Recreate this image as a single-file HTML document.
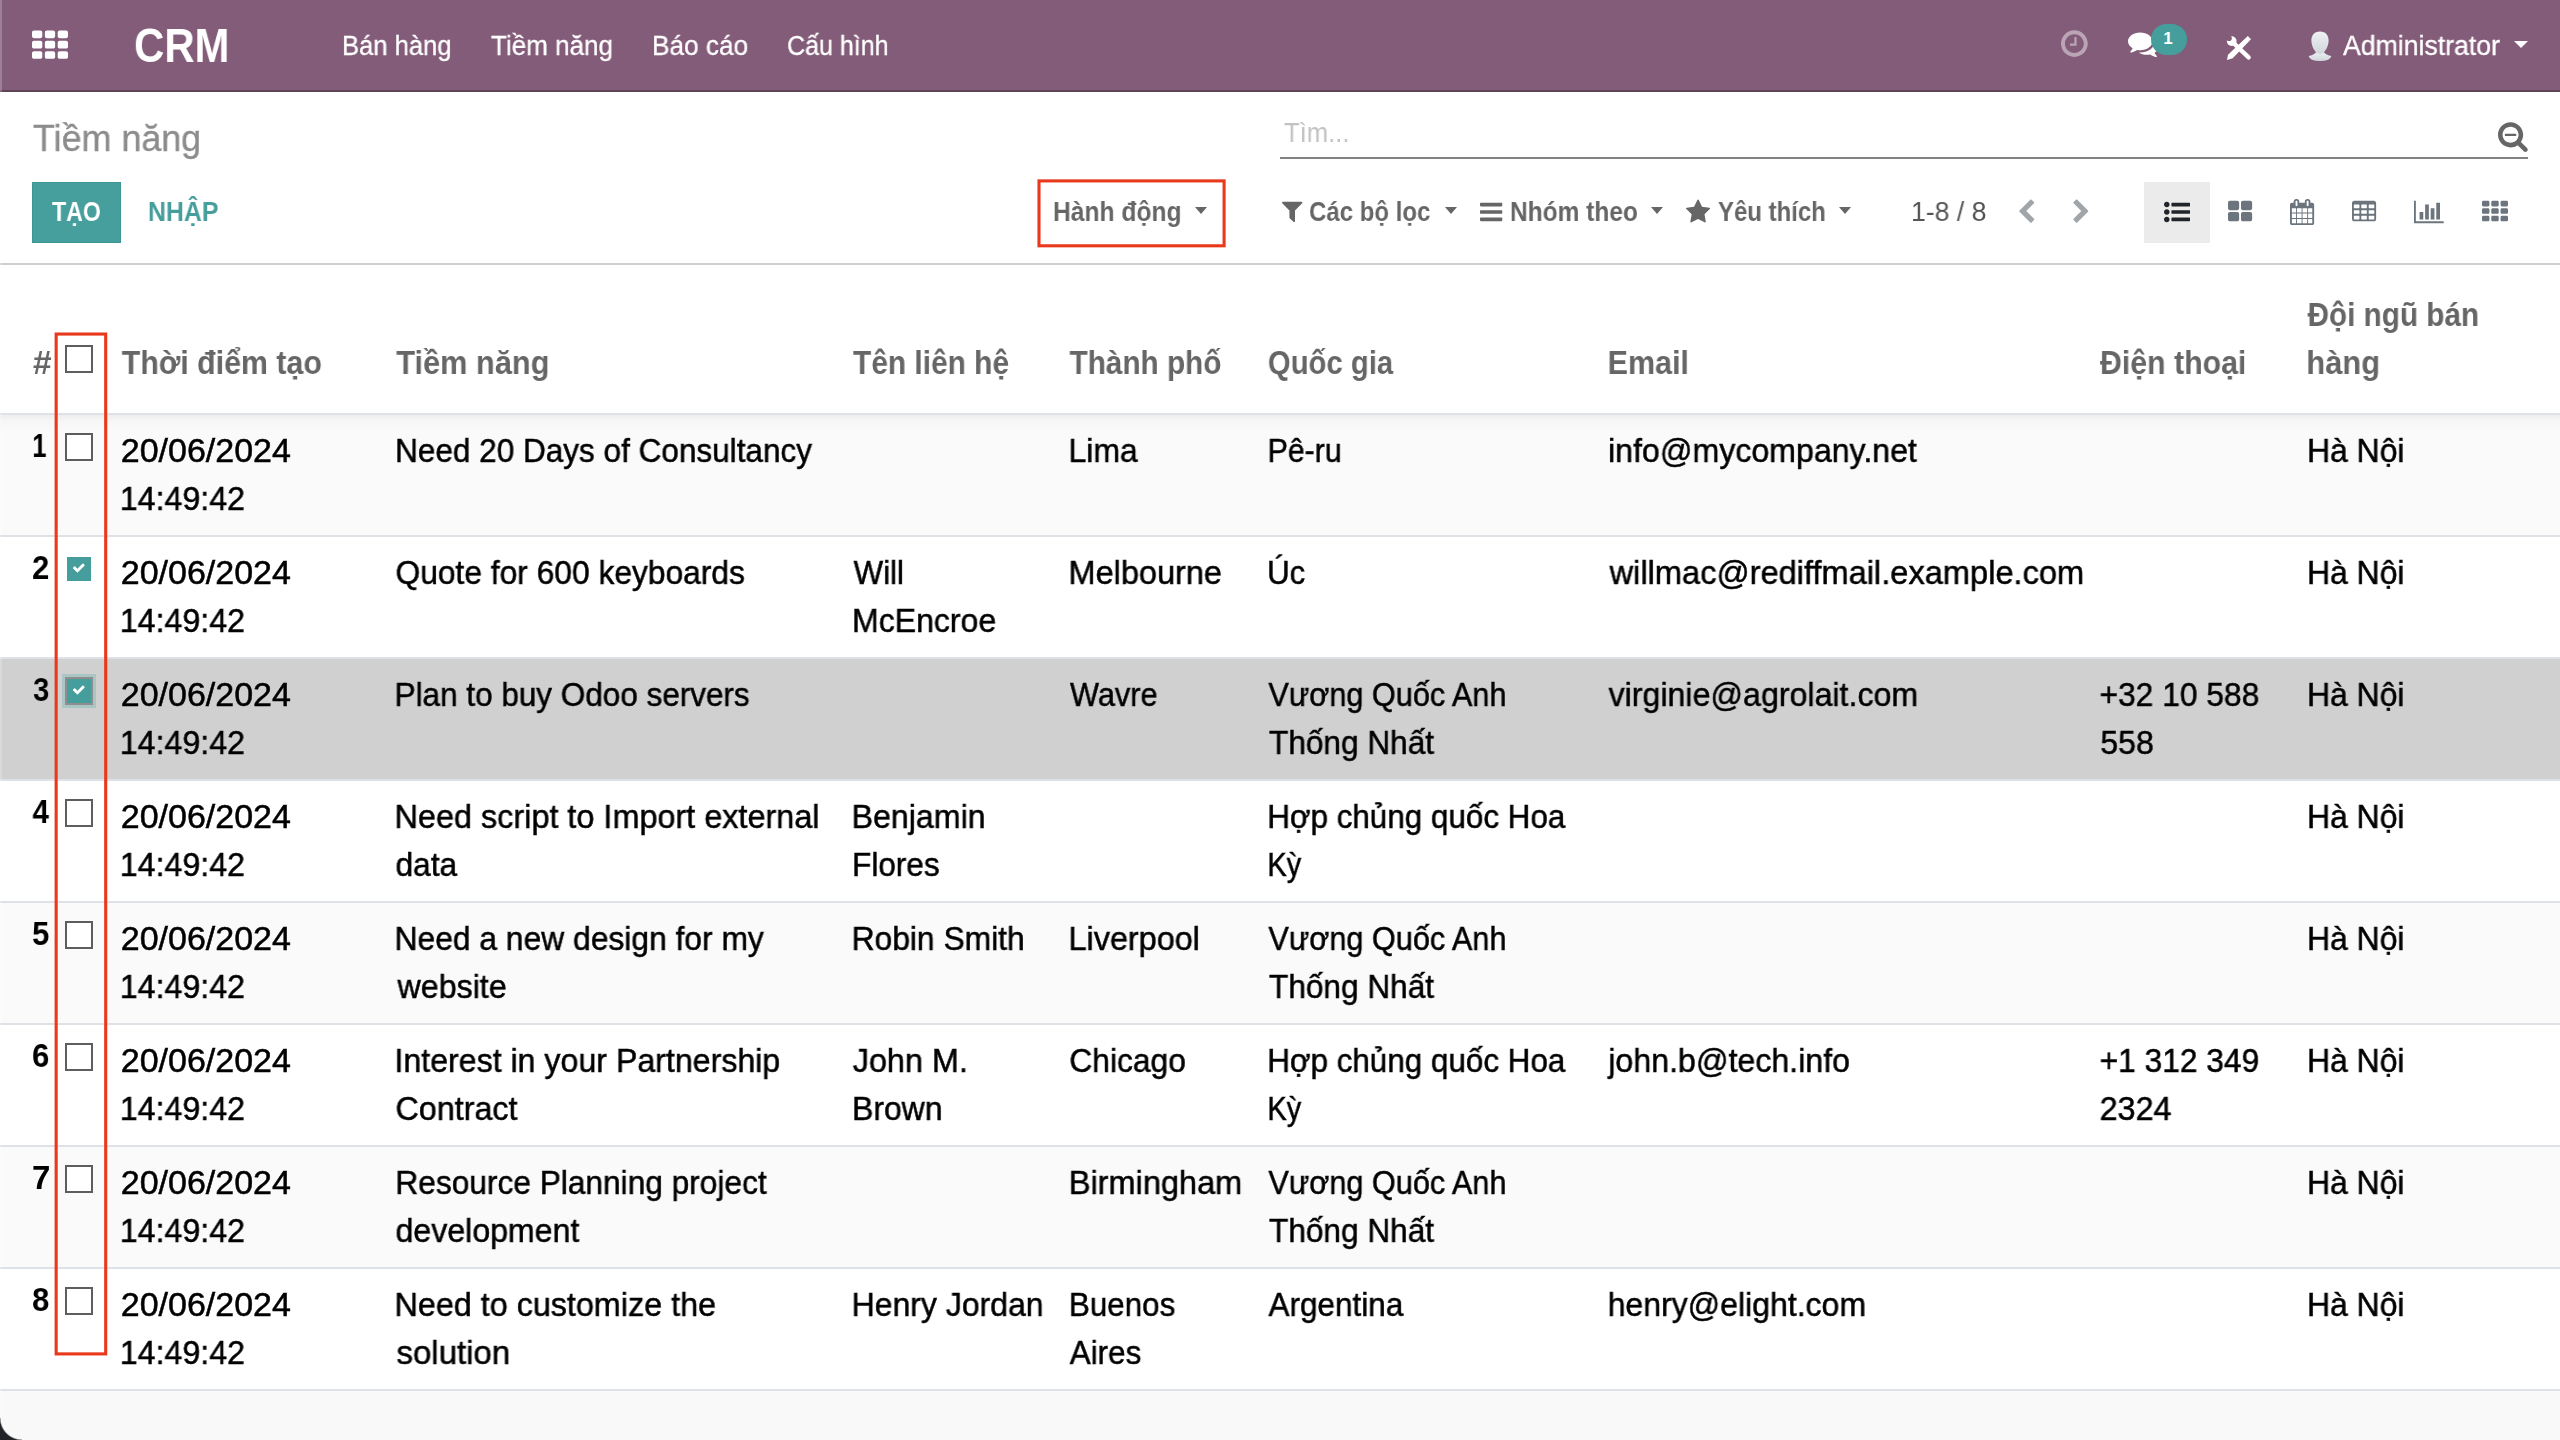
<!DOCTYPE html>
<html lang="vi">
<head>
<meta charset="utf-8">
<title>Tiềm năng - CRM</title>
<style>
*{box-sizing:border-box}
html,body{margin:0;padding:0}
body{width:2560px;height:1440px;overflow:hidden;background:#f9f9f9;font-family:"Liberation Sans","DejaVu Sans",sans-serif;position:relative}
.t{will-change:transform;position:absolute;white-space:nowrap;transform-origin:0 0;line-height:1;display:block}
.ic{position:absolute;display:block;overflow:visible}
.caret{position:absolute;width:0;height:0;display:block}
/* navbar */
.nav{position:absolute;left:0;top:0;width:2560px;height:92px;background:#835c79;border-bottom:2px solid #5f4458}
.brand{font-size:48px;font-weight:bold;color:#fff}
.menu{font-size:27px;color:#fff;-webkit-text-stroke:.3px #fff}
.badge{position:absolute;left:2151px;top:24px;width:36px;height:31px;border-radius:16px;background:#459e9b;color:#fff;font-weight:bold;font-size:17px;line-height:29px;text-align:center;padding-right:2px}
/* control panel */
.cp{position:absolute;left:0;top:92px;width:2560px;height:173px;background:#fff;border-bottom:2px solid #cfcfcf}
.layer{position:absolute;left:0;top:0;width:2560px;height:0}
.crumb{font-size:37px;color:#8c8c8c;-webkit-text-stroke:.35px #8c8c8c}
.ph{font-size:27px;color:#c2c2c2}
.sline{position:absolute;left:1280px;top:157px;width:1248px;height:2px;background:#828282}
.btn-create{position:absolute;left:32px;top:182px;width:89px;height:61px;background:#469f9c;border:1px solid #3c9693}
.btnw{font-size:27px;font-weight:bold;color:#fff}
.btng{font-size:27px;font-weight:bold;color:#459e9b}
.flt{font-size:27px;font-weight:bold;color:#666}
.pager{font-size:27px;color:#555}
.vs-active{position:absolute;left:2144px;top:182px;width:66px;height:61px;background:#ebebeb}
.redbox{position:absolute;left:0;top:0;width:2560px;height:1440px;z-index:5;pointer-events:none;overflow:visible}
/* list */
table.lst{position:absolute;left:0;top:265px;width:2560px;border-collapse:separate;border-spacing:0;table-layout:fixed;background:#fff}
.lst th,.lst td{padding:0;text-align:left;white-space:nowrap;border-bottom:2px solid #dee2e6;position:relative;overflow:visible}
.lst th{height:150px;vertical-align:bottom;padding-bottom:26px;font-weight:bold;font-size:33px;line-height:48px;color:#666}
.lst td{height:122px;vertical-align:top;padding-top:12px;font-size:33px;line-height:48px;color:#000;-webkit-text-stroke:.5px #000}
.lst td.num{font-weight:bold;padding-top:7px;-webkit-text-stroke:0}
.lst .l{will-change:transform;display:block;transform-origin:0 0;white-space:nowrap;width:max-content}
.lst tbody tr:nth-child(odd) td{background:#fafafa}
.lst tbody tr:first-child td{background:linear-gradient(#eeeeee,#f6f6f6 6px,#fafafa 16px)}
.lst tbody tr.hov td{background:#d0d0d0}
.box{position:absolute;left:10px;width:28px;height:28px;border:2px solid #5e5e5e;background:#fff;display:block}
td .box{top:18px}
th .box{top:80px}
.box.chk{border-color:transparent;background:#459e9b;background-clip:padding-box}
.box.chk .ic{margin:-2px 0 0 -2px}
.box.foc{border-color:#8e8e8e;box-shadow:0 0 0 3px #a9c6c5}
.edge{position:absolute;left:0;top:0;width:2px;height:1440px;background:rgba(255,255,255,.22);z-index:6}
.corner{position:absolute;left:0;bottom:0;width:22px;height:22px;z-index:7;background:radial-gradient(circle at 22px 0,rgba(0,0,0,0) 21px,#222327 22.5px)}
</style>
</head>
<body>
<div class="nav">
<svg class="ic" style="left:32.00px;top:28.43px;width:36.00px;height:36.00px" viewBox="0 -1536 1792 1792" fill="#fff" ><path transform="scale(1,-1)" d="M512 288C512 341 469 384 416 384H96C43 384 0 341 0 288V96C0 43 43 0 96 0H416C469 0 512 43 512 96ZM512 800C512 853 469 896 416 896H96C43 896 0 853 0 800V608C0 555 43 512 96 512H416C469 512 512 555 512 608ZM1152 288C1152 341 1109 384 1056 384H736C683 384 640 341 640 288V96C640 43 683 0 736 0H1056C1109 0 1152 43 1152 96ZM512 1312C512 1365 469 1408 416 1408H96C43 1408 0 1365 0 1312V1120C0 1067 43 1024 96 1024H416C469 1024 512 1067 512 1120ZM1152 800C1152 853 1109 896 1056 896H736C683 896 640 853 640 800V608C640 555 683 512 736 512H1056C1109 512 1152 555 1152 608ZM1792 288C1792 341 1749 384 1696 384H1376C1323 384 1280 341 1280 288V96C1280 43 1323 0 1376 0H1696C1749 0 1792 43 1792 96ZM1152 1312C1152 1365 1109 1408 1056 1408H736C683 1408 640 1365 640 1312V1120C640 1067 683 1024 736 1024H1056C1109 1024 1152 1067 1152 1120ZM1792 800C1792 853 1749 896 1696 896H1376C1323 896 1280 853 1280 800V608C1280 555 1323 512 1376 512H1696C1749 512 1792 555 1792 608ZM1792 1312C1792 1365 1749 1408 1696 1408H1376C1323 1408 1280 1365 1280 1312V1120C1280 1067 1323 1024 1376 1024H1696C1749 1024 1792 1067 1792 1120Z"/></svg>
<span class="t brand" style="left:134.13px;top:21.60px;transform:scaleX(0.8735)">CRM</span>
<span class="t menu" style="left:341.60px;top:32.85px;transform:scaleX(0.9481)">Bán hàng</span>
<span class="t menu" style="left:491.25px;top:32.85px;transform:scaleX(0.9638)">Tiềm năng</span>
<span class="t menu" style="left:651.81px;top:32.85px;transform:scaleX(0.9708)">Báo cáo</span>
<span class="t menu" style="left:787.32px;top:32.85px;transform:scaleX(0.9273)">Cấu hình</span>
<svg class="ic" style="left:2061.00px;top:27.77px;width:26.74px;height:31.20px" viewBox="0 -1536 1536 1792" fill="rgba(255,255,255,.45)" ><path transform="scale(1,-1)" d="M896 992C896 1010 882 1024 864 1024H800C782 1024 768 1010 768 992V640H544C526 640 512 626 512 608V544C512 526 526 512 544 512H864C882 512 896 526 896 544ZM1312 640C1312 340 1068 96 768 96C468 96 224 340 224 640C224 940 468 1184 768 1184C1068 1184 1312 940 1312 640ZM1536 640C1536 1064 1192 1408 768 1408C344 1408 0 1064 0 640C0 216 344 -128 768 -128C1192 -128 1536 216 1536 640Z"/></svg>
<svg class="ic" style="left:2127.50px;top:28.04px;width:31.20px;height:31.20px" viewBox="0 -1536 1792 1792" fill="#fff" ><path transform="scale(1,-1)" d="M1408 768C1408 1051 1093 1280 704 1280C315 1280 0 1051 0 768C0 606 104 461 266 367C232 284 188 245 149 201C138 188 125 176 129 157C129 157 129 157 129 157C132 140 146 128 161 128C162 128 163 128 164 128C194 132 223 137 250 144C351 170 445 213 528 272C584 262 643 256 704 256C1093 256 1408 485 1408 768ZM1792 512C1792 679 1682 827 1513 920C1528 871 1536 820 1536 768C1536 589 1444 424 1277 302C1122 190 919 128 704 128C675 128 645 130 616 132C741 50 907 0 1088 0C1149 0 1208 6 1264 16C1347 -43 1441 -86 1542 -112C1569 -119 1598 -124 1628 -128C1644 -130 1659 -117 1663 -99C1663 -99 1663 -99 1663 -99C1667 -80 1654 -68 1643 -55C1604 -11 1560 28 1526 111C1688 205 1792 349 1792 512Z"/></svg>
<span class="badge">1</span>
<svg class="ic" style="left:2222px;top:32px;width:32px;height:32px" viewBox="2222 32 32 32" fill="none" stroke="#fff"><path d="M2247.8 36.1 L2251 39.3 L2232.7 58.2 L2227 59.9 L2228 54.8 Z" fill="#fff" stroke="none"/><path d="M2233.6 43.2 L2248.6 57.4" stroke-width="4.4" stroke-linecap="round"/><circle cx="2231.7" cy="41.1" r="4.9" fill="#fff" stroke="none"/><circle cx="2229" cy="38.2" r="2.8" fill="#835c79" stroke="none"/></svg>

<svg class="ic" style="left:2306px;top:29px;width:28px;height:34px" viewBox="2306 29 28 34"><defs><linearGradient id="ag" x1="0" y1="0" x2="0" y2="1"><stop offset="0" stop-color="#f0f2f4"/><stop offset="1" stop-color="#d0d6db"/></linearGradient></defs><path d="M2308.7 56 Q2315.5 54.6 2316.6 51 L2323.4 51 Q2324.5 54.6 2331.3 56 Q2330.5 61 2320 61 Q2309.5 61 2308.7 56Z" fill="url(#ag)"/><path d="M2320 31.4 C2326 31.4 2328.8 35.5 2328.6 41 C2328.4 47 2324.5 54 2320 54 C2315.5 54 2311.6 47 2311.4 41 C2311.2 35.5 2314 31.4 2320 31.4Z" fill="url(#ag)"/></svg>

<span class="t menu" style="left:2343.40px;top:32.70px;transform:scaleX(0.9871)">Administrator</span>
<i class="caret" style="left:2514px;top:41px;border-top:7px solid #fff;border-left:7.0px solid transparent;border-right:7.0px solid transparent"></i>
</div>
<div class="cp"></div>
<div class="layer">
<span class="t crumb" style="left:32.75px;top:120.20px;transform:scaleX(0.9697)">Tiềm năng</span>
<span class="t ph" style="left:1284.00px;top:120.00px;transform:scaleX(0.9483)">Tìm...</span>
<div class="sline"></div>
<svg class="ic" style="left:2498.30px;top:119.61px;width:29.71px;height:32.00px" viewBox="0 -1536 1664 1792" fill="#666" ><path transform="scale(1,-1)" d="M1024 736C1024 753 1009 768 992 768H416C399 768 384 753 384 736V672C384 655 399 640 416 640H992C1009 640 1024 655 1024 672ZM1152 704C1152 457 951 256 704 256C457 256 256 457 256 704C256 951 457 1152 704 1152C951 1152 1152 951 1152 704ZM1664 -128C1664 -94 1650 -61 1627 -38L1284 305C1365 422 1408 562 1408 704C1408 1093 1093 1408 704 1408C315 1408 0 1093 0 704C0 315 315 0 704 0C846 0 986 43 1103 124L1446 -218C1469 -242 1502 -256 1536 -256C1607 -256 1664 -199 1664 -128Z"/></svg>
<div class="btn-create"></div>
<span class="t btnw" style="left:52.25px;top:199.10px;transform:scaleX(0.8573)">TẠO</span>
<span class="t btng" style="left:147.58px;top:199.10px;transform:scaleX(0.9206)">NHẬP</span>
<span class="t flt" style="left:1052.84px;top:199.10px;transform:scaleX(0.9117)">Hành động</span>
<i class="caret" style="left:1194.5px;top:207px;border-top:7px solid #666;border-left:6.75px solid transparent;border-right:6.75px solid transparent"></i>
<svg class="ic" style="left:1282.00px;top:198.49px;width:20.43px;height:26.00px" viewBox="0 -1536 1408 1792" fill="#666" ><path transform="scale(1,-1)" d="M1403 1241C1393 1264 1370 1280 1344 1280H64C38 1280 15 1264 5 1241C-5 1217 0 1189 19 1171L512 678V192C512 175 519 159 531 147L787 -109C799 -122 815 -128 832 -128C840 -128 849 -126 857 -123C880 -113 896 -90 896 -64V678L1389 1171C1408 1189 1413 1217 1403 1241Z"/></svg>
<span class="t flt" style="left:1309.11px;top:199.10px;transform:scaleX(0.8892)">Các bộ lọc</span>
<i class="caret" style="left:1445px;top:207px;border-top:7px solid #666;border-left:6.5px solid transparent;border-right:6.5px solid transparent"></i>
<svg class="ic" style="left:1479.50px;top:198.69px;width:22.29px;height:26.00px" viewBox="0 -1536 1536 1792" fill="#666" ><path transform="scale(1,-1)" d="M1536 192C1536 227 1507 256 1472 256H64C29 256 0 227 0 192V64C0 29 29 0 64 0H1472C1507 0 1536 29 1536 64ZM1536 704C1536 739 1507 768 1472 768H64C29 768 0 739 0 704V576C0 541 29 512 64 512H1472C1507 512 1536 541 1536 576ZM1536 1216C1536 1251 1507 1280 1472 1280H64C29 1280 0 1251 0 1216V1088C0 1053 29 1024 64 1024H1472C1507 1024 1536 1053 1536 1088Z"/></svg>
<span class="t flt" style="left:1509.59px;top:199.10px;transform:scaleX(0.9069)">Nhóm theo</span>
<i class="caret" style="left:1651px;top:207px;border-top:7px solid #666;border-left:6.5px solid transparent;border-right:6.5px solid transparent"></i>
<svg class="ic" style="left:1686.00px;top:199.04px;width:24.14px;height:26.00px" viewBox="0 -1536 1664 1792" fill="#666" ><path transform="scale(1,-1)" d="M1664 889C1664 919 1632 931 1608 935L1106 1008L881 1463C872 1482 855 1504 832 1504C809 1504 792 1482 783 1463L558 1008L56 935C31 931 0 919 0 889C0 871 13 854 25 841L389 487L303 -13C302 -20 301 -26 301 -33C301 -59 314 -83 343 -83C357 -83 370 -78 383 -71L832 165L1281 -71C1293 -78 1307 -83 1321 -83C1350 -83 1362 -59 1362 -33C1362 -26 1362 -20 1361 -13L1275 487L1638 841C1651 854 1664 871 1664 889Z"/></svg>
<span class="t flt" style="left:1718.00px;top:199.10px;transform:scaleX(0.8873)">Yêu thích</span>
<i class="caret" style="left:1839px;top:207px;border-top:7px solid #666;border-left:6.5px solid transparent;border-right:6.5px solid transparent"></i>
<span class="t pager" style="left:1911.03px;top:199.10px;transform:scaleX(0.9860)">1-8 / 8</span>
<svg class="ic" style="left:2016.56px;top:198.92px;width:18.57px;height:26.00px" viewBox="0 -1536 1280 1792" fill="#a0a5aa" ><path transform="scale(1,-1)" d="M1171 1235C1196 1260 1196 1300 1171 1325L1005 1491C980 1516 940 1516 915 1491L173 749C148 724 148 684 173 659L915 -83C940 -108 980 -108 1005 -83L1171 83C1196 108 1196 148 1171 173L640 704L1171 1235Z"/></svg>
<svg class="ic" style="left:2071.89px;top:198.92px;width:18.57px;height:26.00px" viewBox="0 -1536 1280 1792" fill="#a0a5aa" ><path transform="scale(1,-1)" d="M1107 659C1132 684 1132 724 1107 749L365 1491C340 1516 300 1516 275 1491L109 1325C84 1300 84 1260 109 1235L640 704L109 173C84 148 84 108 109 83L275 -83C300 -108 340 -108 365 -83L1107 659Z"/></svg>
<div class="vs-active"></div>
<svg class="ic" style="left:2163.50px;top:198.61px;width:26.00px;height:26.00px" viewBox="0 -1536 1792 1792" fill="#212529" ><path transform="scale(1,-1)" d="M384 128C384 234 298 320 192 320C86 320 0 234 0 128C0 22 86 -64 192 -64C298 -64 384 22 384 128ZM384 640C384 746 298 832 192 832C86 832 0 746 0 640C0 534 86 448 192 448C298 448 384 534 384 640ZM1792 224C1792 241 1777 256 1760 256H544C527 256 512 241 512 224V32C512 15 527 0 544 0H1760C1777 0 1792 15 1792 32ZM384 1152C384 1258 298 1344 192 1344C86 1344 0 1258 0 1152C0 1046 86 960 192 960C298 960 384 1046 384 1152ZM1792 736C1792 753 1777 768 1760 768H544C527 768 512 753 512 736V544C512 527 527 512 544 512H1760C1777 512 1792 527 1792 544ZM1792 1248C1792 1265 1777 1280 1760 1280H544C527 1280 512 1265 512 1248V1056C512 1039 527 1024 544 1024H1760C1777 1024 1792 1039 1792 1056Z"/></svg>
<svg class="ic" style="left:2227.60px;top:199.04px;width:24.14px;height:26.00px" viewBox="0 -1536 1664 1792" fill="#6c757d" ><path transform="scale(1,-1)" d="M768 512C768 582 710 640 640 640H128C58 640 0 582 0 512V128C0 58 58 0 128 0H640C710 0 768 58 768 128ZM768 1280C768 1350 710 1408 640 1408H128C58 1408 0 1350 0 1280V896C0 826 58 768 128 768H640C710 768 768 826 768 896ZM1664 512C1664 582 1606 640 1536 640H1024C954 640 896 582 896 512V128C896 58 954 0 1024 0H1536C1606 0 1664 58 1664 128ZM1664 1280C1664 1350 1606 1408 1536 1408H1024C954 1408 896 1350 896 1280V896C896 826 954 768 1024 768H1536C1606 768 1664 826 1664 896Z"/></svg>
<svg class="ic" style="left:2290.00px;top:198.80px;width:24.14px;height:26.00px" viewBox="0 -1536 1664 1792" fill="#6c757d" ><path transform="scale(1,-1)" d="M128 -128V160H416V-128ZM480 -128V160H800V-128ZM128 224V544H416V224ZM480 224V544H800V224ZM128 608V896H416V608ZM864 -128V160H1184V-128ZM480 608V896H800V608ZM1248 -128V160H1536V-128ZM864 224V544H1184V224ZM512 1088C512 1071 497 1056 480 1056H416C399 1056 384 1071 384 1088V1376C384 1393 399 1408 416 1408H480C497 1408 512 1393 512 1376V1088ZM1248 224V544H1536V224ZM864 608V896H1184V608ZM1248 608V896H1536V608ZM1280 1088C1280 1071 1265 1056 1248 1056H1184C1167 1056 1152 1071 1152 1088V1376C1152 1393 1167 1408 1184 1408H1248C1265 1408 1280 1393 1280 1376V1088ZM1664 1152C1664 1222 1606 1280 1536 1280H1408V1376C1408 1464 1336 1536 1248 1536H1184C1096 1536 1024 1464 1024 1376V1280H640V1376C640 1464 568 1536 480 1536H416C328 1536 256 1464 256 1376V1280H128C58 1280 0 1222 0 1152V-128C0 -198 58 -256 128 -256H1536C1606 -256 1664 -198 1664 -128Z"/></svg>
<svg class="ic" style="left:2352.00px;top:199.04px;width:24.14px;height:26.00px" viewBox="0 -1536 1664 1792" fill="#6c757d" ><path transform="scale(1,-1)" d="M512 160C512 142 498 128 480 128H160C142 128 128 142 128 160V352C128 370 142 384 160 384H480C498 384 512 370 512 352V160ZM512 544C512 526 498 512 480 512H160C142 512 128 526 128 544V736C128 754 142 768 160 768H480C498 768 512 754 512 736V544ZM1024 160C1024 142 1010 128 992 128H672C654 128 640 142 640 160V352C640 370 654 384 672 384H992C1010 384 1024 370 1024 352V160ZM512 928C512 910 498 896 480 896H160C142 896 128 910 128 928V1120C128 1138 142 1152 160 1152H480C498 1152 512 1138 512 1120V928ZM1024 544C1024 526 1010 512 992 512H672C654 512 640 526 640 544V736C640 754 654 768 672 768H992C1010 768 1024 754 1024 736V544ZM1536 160C1536 142 1522 128 1504 128H1184C1166 128 1152 142 1152 160V352C1152 370 1166 384 1184 384H1504C1522 384 1536 370 1536 352V160ZM1024 928C1024 910 1010 896 992 896H672C654 896 640 910 640 928V1120C640 1138 654 1152 672 1152H992C1010 1152 1024 1138 1024 1120V928ZM1536 544C1536 526 1522 512 1504 512H1184C1166 512 1152 526 1152 544V736C1152 754 1166 768 1184 768H1504C1522 768 1536 754 1536 736V544ZM1536 928C1536 910 1522 896 1504 896H1184C1166 896 1152 910 1152 928V1120C1152 1138 1166 1152 1184 1152H1504C1522 1152 1536 1138 1536 1120V928ZM1664 1248C1664 1336 1592 1408 1504 1408H160C72 1408 0 1336 0 1248V160C0 72 72 0 160 0H1504C1592 0 1664 72 1664 160Z"/></svg>
<svg class="ic" style="left:2414.00px;top:199.04px;width:29.71px;height:26.00px" viewBox="0 -1536 2048 1792" fill="#6c757d" ><path transform="scale(1,-1)" d="M640 640H384V128H640ZM1024 1152H768V128H1024ZM2048 0H128V1408H0V-128H2048ZM1408 896H1152V128H1408ZM1792 1280H1536V128H1792Z"/></svg>
<svg class="ic" style="left:2482.00px;top:199.04px;width:26.00px;height:26.00px" viewBox="0 -1536 1792 1792" fill="#6c757d" ><path transform="scale(1,-1)" d="M512 288C512 341 469 384 416 384H96C43 384 0 341 0 288V96C0 43 43 0 96 0H416C469 0 512 43 512 96ZM512 800C512 853 469 896 416 896H96C43 896 0 853 0 800V608C0 555 43 512 96 512H416C469 512 512 555 512 608ZM1152 288C1152 341 1109 384 1056 384H736C683 384 640 341 640 288V96C640 43 683 0 736 0H1056C1109 0 1152 43 1152 96ZM512 1312C512 1365 469 1408 416 1408H96C43 1408 0 1365 0 1312V1120C0 1067 43 1024 96 1024H416C469 1024 512 1067 512 1120ZM1152 800C1152 853 1109 896 1056 896H736C683 896 640 853 640 800V608C640 555 683 512 736 512H1056C1109 512 1152 555 1152 608ZM1792 288C1792 341 1749 384 1696 384H1376C1323 384 1280 341 1280 288V96C1280 43 1323 0 1376 0H1696C1749 0 1792 43 1792 96ZM1152 1312C1152 1365 1109 1408 1056 1408H736C683 1408 640 1365 640 1312V1120C640 1067 683 1024 736 1024H1056C1109 1024 1152 1067 1152 1120ZM1792 800C1792 853 1749 896 1696 896H1376C1323 896 1280 853 1280 800V608C1280 555 1323 512 1376 512H1696C1749 512 1792 555 1792 608ZM1792 1312C1792 1365 1749 1408 1696 1408H1376C1323 1408 1280 1365 1280 1312V1120C1280 1067 1323 1024 1376 1024H1696C1749 1024 1792 1067 1792 1120Z"/></svg>
</div>
<table class="lst"><colgroup><col style="width:55px"><col style="width:57px"><col style="width:275px"><col style="width:456px"><col style="width:217px"><col style="width:199px"><col style="width:341px"><col style="width:490px"><col style="width:208px"><col style="width:262px"></colgroup>
<thead><tr>
<th><span class="l" style="transform:translateX(33.00px) scaleX(1.0139)">#</span></th>
<th class="cb"><i class="box"></i></th>
<th><span class="l" style="transform:translateX(9.75px) scaleX(0.9186)">Thời điểm tạo</span></th>
<th><span class="l" style="transform:translateX(9.25px) scaleX(0.9321)">Tiềm năng</span></th>
<th><span class="l" style="transform:translateX(10.00px) scaleX(0.9055)">Tên liên hệ</span></th>
<th><span class="l" style="transform:translateX(9.50px) scaleX(0.9008)">Thành phố</span></th>
<th><span class="l" style="transform:translateX(8.86px) scaleX(0.8876)">Quốc gia</span></th>
<th><span class="l" style="transform:translateX(7.65px) scaleX(0.9240)">Email</span></th>
<th><span class="l" style="transform:translateX(10.00px) scaleX(0.9178)">Điện thoại</span></th>
<th><span class="l" style="transform:translateX(9.60px) scaleX(0.8993)">Đội ngũ bán</span><span class="l" style="transform:translateX(8.33px) scaleX(0.9348)">hàng</span></th>
</tr></thead><tbody>
<tr>
<td class="num"><span class="l" style="transform:translateX(32.19px) scaleX(0.7812)">1</span></td>
<td class="cb"><i class="box"></i></td>
<td><span class="l" style="transform:translateX(8.72px) scaleX(1.0302)">20/06/2024</span><span class="l" style="transform:translateX(7.80px) scaleX(0.9752)">14:49:42</span></td>
<td><span class="l" style="transform:translateX(8.09px) scaleX(0.9550)">Need 20 Days of Consultancy</span></td>
<td></td>
<td><span class="l" style="transform:translateX(8.57px) scaleX(0.9655)">Lima</span></td>
<td><span class="l" style="transform:translateX(8.66px) scaleX(0.9180)">Pê-ru</span></td>
<td><span class="l" style="transform:translateX(8.05px) scaleX(0.9736)">info@mycompany.net</span></td>
<td></td>
<td><span class="l" style="transform:translateX(9.07px) scaleX(0.9658)">Hà Nội</span></td>
</tr>
<tr>
<td class="num"><span class="l" style="transform:translateX(32.06px) scaleX(0.9412)">2</span></td>
<td class="cb"><i class="box chk"><svg class="ic" style="left:7.28px;top:6.27px;width:13.60px;height:13.60px" viewBox="0 -1536 1792 1792" fill="#fff" ><path transform="scale(1,-1)" d="M1671 970C1671 995 1661 1020 1643 1038L1507 1174C1489 1192 1464 1202 1439 1202C1414 1202 1389 1192 1371 1174L715 517L421 812C403 830 378 840 353 840C328 840 303 830 285 812L149 676C131 658 121 633 121 608C121 583 131 558 149 540L511 178L647 42C665 24 690 14 715 14C740 14 765 24 783 42L919 178L1643 902C1661 920 1671 945 1671 970Z"/></svg></i></td>
<td><span class="l" style="transform:translateX(8.72px) scaleX(1.0302)">20/06/2024</span><span class="l" style="transform:translateX(7.80px) scaleX(0.9752)">14:49:42</span></td>
<td><span class="l" style="transform:translateX(8.54px) scaleX(0.9618)">Quote for 600 keyboards</span></td>
<td><span class="l" style="transform:translateX(10.60px) scaleX(0.9477)">Will</span><span class="l" style="transform:translateX(9.06px) scaleX(0.9704)">McEncroe</span></td>
<td><span class="l" style="transform:translateX(8.53px) scaleX(0.9838)">Melbourne</span></td>
<td><span class="l" style="transform:translateX(8.11px) scaleX(0.9463)">Úc</span></td>
<td><span class="l" style="transform:translateX(9.59px) scaleX(0.9880)">willmac@rediffmail.example.com</span></td>
<td></td>
<td><span class="l" style="transform:translateX(9.07px) scaleX(0.9658)">Hà Nội</span></td>
</tr>
<tr class="hov">
<td class="num"><span class="l" style="transform:translateX(33.00px) scaleX(0.8889)">3</span></td>
<td class="cb"><i class="box chk foc"><svg class="ic" style="left:7.28px;top:6.27px;width:13.60px;height:13.60px" viewBox="0 -1536 1792 1792" fill="#fff" ><path transform="scale(1,-1)" d="M1671 970C1671 995 1661 1020 1643 1038L1507 1174C1489 1192 1464 1202 1439 1202C1414 1202 1389 1192 1371 1174L715 517L421 812C403 830 378 840 353 840C328 840 303 830 285 812L149 676C131 658 121 633 121 608C121 583 131 558 149 540L511 178L647 42C665 24 690 14 715 14C740 14 765 24 783 42L919 178L1643 902C1661 920 1671 945 1671 970Z"/></svg></i></td>
<td><span class="l" style="transform:translateX(8.72px) scaleX(1.0302)">20/06/2024</span><span class="l" style="transform:translateX(7.80px) scaleX(0.9752)">14:49:42</span></td>
<td><span class="l" style="transform:translateX(7.59px) scaleX(0.9536)">Plan to buy Odoo servers</span></td>
<td></td>
<td><span class="l" style="transform:translateX(10.00px) scaleX(0.9303)">Wavre</span></td>
<td><span class="l" style="transform:translateX(9.40px) scaleX(0.9279)">Vương Quốc Anh</span><span class="l" style="transform:translateX(10.00px) scaleX(0.9572)">Thống Nhất</span></td>
<td><span class="l" style="transform:translateX(8.60px) scaleX(0.9741)">virginie@agrolait.com</span></td>
<td><span class="l" style="transform:translateX(9.54px) scaleX(0.9620)">+32 10 588</span><span class="l" style="transform:translateX(10.33px) scaleX(0.9714)">558</span></td>
<td><span class="l" style="transform:translateX(9.07px) scaleX(0.9658)">Hà Nội</span></td>
</tr>
<tr>
<td class="num"><span class="l" style="transform:translateX(32.50px) scaleX(0.8947)">4</span></td>
<td class="cb"><i class="box"></i></td>
<td><span class="l" style="transform:translateX(8.72px) scaleX(1.0302)">20/06/2024</span><span class="l" style="transform:translateX(7.80px) scaleX(0.9752)">14:49:42</span></td>
<td><span class="l" style="transform:translateX(7.54px) scaleX(0.9818)">Need script to Import external</span><span class="l" style="transform:translateX(8.54px) scaleX(0.9597)">data</span></td>
<td><span class="l" style="transform:translateX(8.65px) scaleX(0.9730)">Benjamin</span><span class="l" style="transform:translateX(9.09px) scaleX(0.9542)">Flores</span></td>
<td></td>
<td><span class="l" style="transform:translateX(8.30px) scaleX(0.9510)">Hợp chủng quốc Hoa</span><span class="l" style="transform:translateX(8.45px) scaleX(0.8754)">Kỳ</span></td>
<td></td>
<td></td>
<td><span class="l" style="transform:translateX(9.07px) scaleX(0.9658)">Hà Nội</span></td>
</tr>
<tr>
<td class="num"><span class="l" style="transform:translateX(32.06px) scaleX(0.9412)">5</span></td>
<td class="cb"><i class="box"></i></td>
<td><span class="l" style="transform:translateX(8.72px) scaleX(1.0302)">20/06/2024</span><span class="l" style="transform:translateX(7.80px) scaleX(0.9752)">14:49:42</span></td>
<td><span class="l" style="transform:translateX(7.57px) scaleX(0.9632)">Need a new design for my</span><span class="l" style="transform:translateX(10.48px) scaleX(0.9764)">website</span></td>
<td><span class="l" style="transform:translateX(8.68px) scaleX(0.9621)">Robin Smith</span></td>
<td><span class="l" style="transform:translateX(8.54px) scaleX(0.9810)">Liverpool</span></td>
<td><span class="l" style="transform:translateX(9.40px) scaleX(0.9279)">Vương Quốc Anh</span><span class="l" style="transform:translateX(10.00px) scaleX(0.9572)">Thống Nhất</span></td>
<td></td>
<td></td>
<td><span class="l" style="transform:translateX(9.07px) scaleX(0.9658)">Hà Nội</span></td>
</tr>
<tr>
<td class="num"><span class="l" style="transform:translateX(32.06px) scaleX(0.9412)">6</span></td>
<td class="cb"><i class="box"></i></td>
<td><span class="l" style="transform:translateX(8.72px) scaleX(1.0302)">20/06/2024</span><span class="l" style="transform:translateX(7.80px) scaleX(0.9752)">14:49:42</span></td>
<td><span class="l" style="transform:translateX(7.38px) scaleX(0.9739)">Interest in your Partnership</span><span class="l" style="transform:translateX(8.52px) scaleX(0.9778)">Contract</span></td>
<td><span class="l" style="transform:translateX(9.80px) scaleX(0.9799)">John M.</span><span class="l" style="transform:translateX(9.07px) scaleX(0.9669)">Brown</span></td>
<td><span class="l" style="transform:translateX(9.34px) scaleX(0.9628)">Chicago</span></td>
<td><span class="l" style="transform:translateX(8.30px) scaleX(0.9510)">Hợp chủng quốc Hoa</span><span class="l" style="transform:translateX(8.45px) scaleX(0.8754)">Kỳ</span></td>
<td><span class="l" style="transform:translateX(8.27px) scaleX(0.9741)">john.b@tech.info</span></td>
<td><span class="l" style="transform:translateX(9.64px) scaleX(0.9607)">+1 312 349</span><span class="l" style="transform:translateX(9.62px) scaleX(0.9798)">2324</span></td>
<td><span class="l" style="transform:translateX(9.07px) scaleX(0.9658)">Hà Nội</span></td>
</tr>
<tr>
<td class="num"><span class="l" style="transform:translateX(32.00px) scaleX(1.0000)">7</span></td>
<td class="cb"><i class="box"></i></td>
<td><span class="l" style="transform:translateX(8.72px) scaleX(1.0302)">20/06/2024</span><span class="l" style="transform:translateX(7.80px) scaleX(0.9752)">14:49:42</span></td>
<td><span class="l" style="transform:translateX(8.38px) scaleX(0.9592)">Resource Planning project</span><span class="l" style="transform:translateX(8.53px) scaleX(0.9729)">development</span></td>
<td></td>
<td><span class="l" style="transform:translateX(8.83px) scaleX(0.9851)">Birmingham</span></td>
<td><span class="l" style="transform:translateX(9.40px) scaleX(0.9279)">Vương Quốc Anh</span><span class="l" style="transform:translateX(10.00px) scaleX(0.9572)">Thống Nhất</span></td>
<td></td>
<td></td>
<td><span class="l" style="transform:translateX(9.07px) scaleX(0.9658)">Hà Nội</span></td>
</tr>
<tr>
<td class="num"><span class="l" style="transform:translateX(32.06px) scaleX(0.9412)">8</span></td>
<td class="cb"><i class="box"></i></td>
<td><span class="l" style="transform:translateX(8.72px) scaleX(1.0302)">20/06/2024</span><span class="l" style="transform:translateX(7.80px) scaleX(0.9752)">14:49:42</span></td>
<td><span class="l" style="transform:translateX(7.54px) scaleX(0.9791)">Need to customize the</span><span class="l" style="transform:translateX(9.50px) scaleX(0.9992)">solution</span></td>
<td><span class="l" style="transform:translateX(8.66px) scaleX(0.9685)">Henry Jordan</span></td>
<td><span class="l" style="transform:translateX(8.90px) scaleX(0.9504)">Buenos</span><span class="l" style="transform:translateX(9.70px) scaleX(0.9520)">Aires</span></td>
<td><span class="l" style="transform:translateX(9.50px) scaleX(0.9541)">Argentina</span></td>
<td><span class="l" style="transform:translateX(7.66px) scaleX(0.9697)">henry@elight.com</span></td>
<td></td>
<td><span class="l" style="transform:translateX(9.07px) scaleX(0.9658)">Hà Nội</span></td>
</tr>
</tbody></table>
<svg class="redbox" viewBox="0 0 2560 1440" fill="none" stroke="#e8391c" stroke-width="3.1"><rect x="1039" y="180.9" width="185.1" height="64.9"/><rect x="56.15" y="334.05" width="49.55" height="1019.85"/></svg>
<div class="edge"></div>
<div class="corner"></div>
</body>
</html>
